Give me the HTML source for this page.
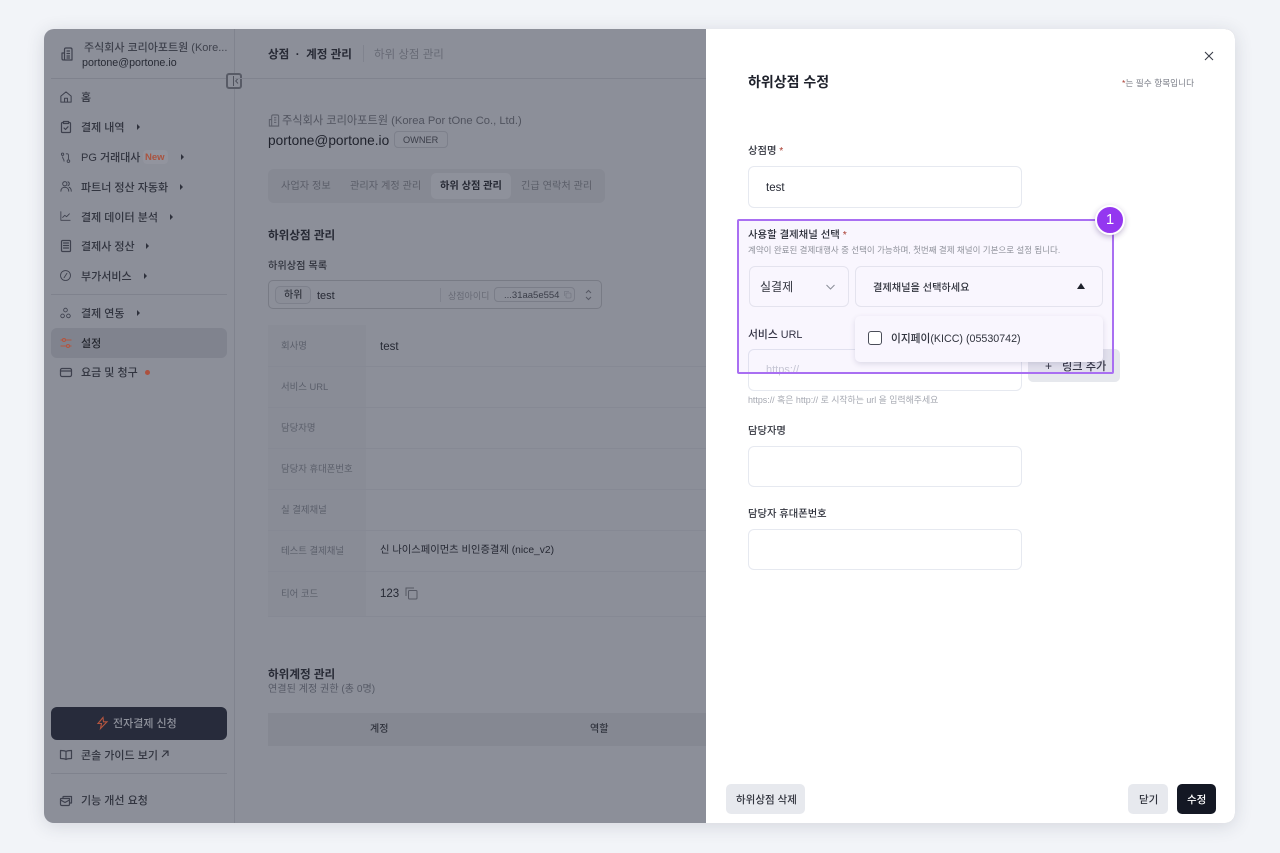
<!DOCTYPE html>
<html lang="ko">
<head>
<meta charset="utf-8">
<title>하위상점 수정</title>
<style>
html,body{margin:0;padding:0;width:1280px;height:853px;overflow:hidden;background:#f2f4f8}
body{font-family:"Liberation Sans","Noto Sans CJK KR",sans-serif;position:relative;color:#2a2d38}
#frame{position:absolute;left:44px;top:29px;width:1191px;height:794px;border-radius:10px;overflow:hidden;background:#8c8f99;box-shadow:0 3px 18px rgba(40,48,70,.15)}
.a{position:absolute}
.t{position:absolute;white-space:nowrap;line-height:16px;margin-top:-6px}
.b{position:absolute;box-sizing:border-box}
svg{position:absolute;fill:none;overflow:visible}
.nav{font-size:11px;color:#31343f;font-weight:500}
.ar{position:absolute;width:0;height:0;border-left:3.5px solid #2e313c;border-top:3px solid transparent;border-bottom:3px solid transparent;margin-top:-3px}
.ic{stroke:#3e414e;stroke-width:1.2;stroke-linecap:round;stroke-linejoin:round}
.lab{font-size:9.400px;color:#5b5f6b;margin-top:-7px}
.val{font-size:11px;color:#262934}
.line{position:absolute;height:1px;background:#868994}
.inp{position:absolute;box-sizing:border-box;background:#fff;border:1px solid #e6e9f0;border-radius:6px}
.fl{font-size:10.300px;color:#30333d;font-weight:500}
.red{color:#a83a2e}
</style>
</head>
<body>
<div id="frame">
<div class="a" style="left:-44px;top:-29px;width:1280px;height:853px">

  <!-- sidebar -->
  <div class="b" style="left:234px;top:29px;width:1px;height:794px;background:#80838e"></div>
  <svg style="left:61px;top:47px" width="12" height="14" viewBox="0 0 12 14" class="ic"><path d="M3.500 13V2.500Q3.500 1 5 1h4.500Q11 1 11 2.500V13H3.500zM3.500 6H1v5.500Q1 13 2.500 13M6 4h2.500M6 6.500h2.500M6 9h2.500M6 11h2.500"/></svg>
  <div class="t" style="left:84px;top:46px;font-size:11px;color:#3f424d;font-weight:500">주식회사 코리아포트원 (Kore...</div>
  <div class="t" style="left:82px;top:61px;font-size:10.700px;color:#272a34">portone@portone.io</div>
  <div class="line" style="left:51px;top:78px;width:183px;background:#7f828d"></div>
  <div class="b" style="left:226px;top:73px;width:16px;height:16px;border:2px solid #585b66;border-radius:3px;background:#8c8f99"></div>
  <div class="b" style="left:233px;top:76px;width:1px;height:10px;background:#4f525d"></div>
  <svg style="left:235px;top:78px" width="3" height="6" viewBox="0 0 3 6" stroke="#4f525d" stroke-width="1"><path d="M3 .5L.7 3 3 5.500"/></svg>

  <svg style="left:60px;top:91px" width="12" height="12" viewBox="0 0 14 14" class="ic"><path d="M1 6L7 1l6 5v7H1zM5.300 13V8.500h3.400V13"/></svg>
  <div class="t nav" style="left:81px;top:96px">홈</div>

  <svg style="left:61px;top:121px" width="10" height="12" viewBox="0 0 10 12" class="ic"><path d="M2.500 1.500H1.500Q.5 1.500.5 2.500v8q0 1 1 1h7q1 0 1-1v-8q0-1-1-1h-1M2.500.5h5v2h-5zM3 7l1.500 1.500L7 5.800"/></svg>
  <div class="t nav" style="left:81px;top:126px">결제 내역</div><div class="ar" style="left:137px;top:127px"></div>

  <svg style="left:60px;top:152px" width="11" height="11" viewBox="0 0 14 15" class="ic"><circle cx="3" cy="3" r="1.600"/><circle cx="11" cy="12.500" r="1.800"/><path d="M3 6.500c0 3 2 2.500 2 6M8 2.500h1.500c1 0 1.500.5 1.500 2v5"/></svg>
  <div class="t nav" style="left:81px;top:156px">PG 거래대사</div>
  <div class="b" style="left:143px;top:150px;width:25px;height:14px;background:#92949e;border-radius:4px"></div>
  <div class="t" style="left:145px;top:156px;font-size:9.500px;font-weight:700;color:#a9533f">New</div>
  <div class="ar" style="left:181px;top:157px"></div>

  <svg style="left:60px;top:181px" width="12" height="11" viewBox="0 0 15 14" class="ic"><circle cx="6" cy="3.500" r="2.700"/><path d="M1 13c0-3 2-5 5-5s5 2 5 5M10 1a2.700 2.700 0 010 5M11.500 8c1.800.7 2.700 2.500 2.700 5"/></svg>
  <div class="t nav" style="left:81px;top:186px">파트너 정산 자동화</div><div class="ar" style="left:180px;top:187px"></div>

  <svg style="left:60px;top:211px" width="11" height="10" viewBox="0 0 15 14" class="ic"><path d="M1 1v12h13M3.500 9l3-3 2.500 2 4-4"/></svg>
  <div class="t nav" style="left:81px;top:216px">결제 데이터 분석</div><div class="ar" style="left:170px;top:217px"></div>

  <svg style="left:61px;top:240px" width="10" height="12" viewBox="0 0 10 12" class="ic"><rect x=".5" y=".5" width="9" height="11" rx="1"/><path d="M2.500 3h5M2.500 5.500h5M2.500 8h5"/></svg>
  <div class="t nav" style="left:81px;top:245px">결제사 정산</div><div class="ar" style="left:146px;top:246px"></div>

  <svg style="left:60px;top:270px" width="11" height="11" viewBox="0 0 15 15" class="ic"><circle cx="7.500" cy="7.500" r="6.800"/><path d="M5.500 10.500l4-6"/></svg>
  <div class="t nav" style="left:81px;top:275px">부가서비스</div><div class="ar" style="left:144px;top:276px"></div>

  <div class="line" style="left:51px;top:294px;width:176px;background:#7f828d"></div>

  <svg style="left:60px;top:307px" width="11" height="12" viewBox="0 0 15 15" class="ic"><circle cx="7.500" cy="3.500" r="2.500"/><circle cx="3.500" cy="11.500" r="2.500"/><circle cx="11.500" cy="11.500" r="2.500"/></svg>
  <div class="t nav" style="left:81px;top:312px">결제 연동</div><div class="ar" style="left:137px;top:313px"></div>

  <div class="b" style="left:51px;top:328px;width:176px;height:30px;border-radius:6px;background:#80838e"></div>
  <svg style="left:60px;top:338px" width="12" height="10" viewBox="0 0 12 10" stroke="#b4553f" stroke-width="1.100"><path d="M.5 2h1.500M6 2h5.500M.5 8h5.500M10 8h1.500"/><circle cx="4" cy="2" r="1.500"/><circle cx="8" cy="8" r="1.500"/></svg>
  <div class="t nav" style="left:81px;top:342px;color:#24272f;font-weight:500">설정</div>

  <svg style="left:60px;top:368px" width="12" height="9" viewBox="0 0 12 9" class="ic"><rect x=".5" y=".5" width="11" height="8" rx="1.500"/><path d="M.5 3h11"/></svg>
  <div class="t nav" style="left:81px;top:371px">요금 및 청구</div>
  <div class="b" style="left:145px;top:370px;width:5px;height:5px;border-radius:50%;background:#ac513e"></div>

  <div class="b" style="left:51px;top:707px;width:176px;height:33px;border-radius:6px;background:#272b3b"></div>
  <svg style="left:97px;top:717px" width="11" height="12" viewBox="0 0 11 12" stroke="#b4553f" stroke-width="1.100"><path d="M6 .5L1 6.500h3.500L3.500 11.500 10 4.800H6.500z"/></svg>
  <div class="t" style="left:113px;top:722px;font-size:11px;font-weight:500;color:#8f929c">전자결제 신청</div>

  <svg style="left:60px;top:750px" width="12" height="10" viewBox="0 0 12 10" class="ic"><path d="M6 1.500C5 .8 3 .5.500.5v8c2.500 0 4.500.3 5.500 1 1-.7 3-1 5.500-1v-8C9 .5 7 .8 6 1.500v8"/></svg>
  <div class="t" style="left:81px;top:754px;font-size:11px;font-weight:500;color:#31343f">콘솔 가이드 보기</div>
  <svg style="left:161px;top:750px" width="8" height="8" viewBox="0 0 8 8" stroke="#2e313c" stroke-width="1.100"><path d="M1 7l6-6M2 1h5v5"/></svg>
  <div class="line" style="left:51px;top:773px;width:176px;background:#7f828d"></div>
  <svg style="left:60px;top:796px" width="12" height="10" viewBox="0 0 12 10" class="ic"><path d="M3 2V1q0-.5.500-.5h8v6.500h-1.500M.5 3q0-.5.500-.5h8.500V8q0 1.500-1 1.500H2Q.5 9.500.5 8zM.5 4l4.500 2.500L9.500 4"/></svg>
  <div class="t" style="left:81px;top:799px;font-size:11px;font-weight:500;color:#31343f">기능 개선 요청</div>

  <!-- header -->
  <div class="t" style="left:268px;top:53px;font-size:11.600px;font-weight:700;color:#272a35">상점 &nbsp;·&nbsp; 계정 관리</div>
  <div class="b" style="left:363px;top:45px;width:1px;height:17px;background:#80838e"></div>
  <div class="t" style="left:374px;top:53px;font-size:11.500px;color:#686b76">하위 상점 관리</div>
  <div class="line" style="left:235px;top:78px;width:471px;background:#80838e"></div>

  <!-- account -->
  <svg style="left:268px;top:114px" width="12" height="13" viewBox="0 0 12 14" stroke="#5c5f6a" stroke-width="1.100"><path d="M3.500 13V2.500Q3.500 1 5 1h4.500Q11 1 11 2.500V13H3.500zM3.500 6H1v7h10M6 4h2.500M6 6.500h2.500M6 9h2.500"/></svg>
  <div class="t" style="left:282px;top:119px;font-size:11.200px;color:#50535e">주식회사 코리아포트원 (Korea Por tOne Co., Ltd.)</div>
  <div class="t" style="left:268px;top:139px;font-size:13.700px;font-weight:500;color:#1f222c">portone@portone.io</div>
  <div class="b" style="left:394px;top:131px;width:54px;height:17px;border:1px solid #7d808b;border-radius:4px"></div>
  <div class="t" style="left:403px;top:138px;font-size:9.200px;color:#3b3e49">OWNER</div>

  <!-- tabs -->
  <div class="b" style="left:268px;top:169px;width:337px;height:34px;border-radius:6px;background:#868993"></div>
  <div class="b" style="left:431px;top:173px;width:80px;height:26px;border-radius:5px;background:#8e919b"></div>
  <div class="t" style="left:281px;top:185px;font-size:10.200px;color:#5b5e69">사업자 정보</div>
  <div class="t" style="left:350px;top:185px;font-size:10.200px;color:#5b5e69">관리자 계정 관리</div>
  <div class="t" style="left:440px;top:185px;font-size:10.200px;font-weight:700;color:#262934">하위 상점 관리</div>
  <div class="t" style="left:521px;top:185px;font-size:10.200px;color:#5b5e69">긴급 연락처 관리</div>

  <div class="t" style="left:268px;top:234px;font-size:11.600px;font-weight:700;color:#272a35">하위상점 관리</div>
  <div class="t" style="left:268px;top:265px;font-size:10.200px;font-weight:500;color:#30333d">하위상점 목록</div>

  <div class="b" style="left:268px;top:280px;width:334px;height:29px;border:1px solid #787b85;border-radius:5px;background:#8c8f99"></div>
  <div class="b" style="left:275px;top:286px;width:36px;height:18px;border:1px solid #7d808b;border-radius:5px;background:#8a8d97"></div>
  <div class="t" style="left:284px;top:294px;font-size:10px;font-weight:500;color:#30333d">하위</div>
  <div class="t" style="left:317px;top:294px;font-size:11px;font-weight:500;color:#262934">test</div>
  <div class="b" style="left:440px;top:288px;width:1px;height:14px;background:#7f828d"></div>
  <div class="t" style="left:448px;top:294px;font-size:9px;color:#686b76">상점아이디</div>
  <div class="b" style="left:494px;top:287px;width:81px;height:15px;border:1px solid #7a7d88;border-radius:4px"></div>
  <div class="t" style="left:504px;top:294px;font-size:9.500px;color:#3b3e49">...31aa5e554</div>
  <svg style="left:563px;top:290px" width="9" height="9" viewBox="0 0 9 9" stroke="#767984" stroke-width=".8"><rect x="3" y="3" width="5" height="5" rx="1"/><path d="M6 1.500H1.500V6"/></svg>
  <svg style="left:585px;top:289px" width="7" height="12" viewBox="0 0 7 12" stroke="#565964" stroke-width="1"><path d="M1 4l2.500-2.500L6 4M1 8l2.500 2.500L6 8"/></svg>

  <!-- table -->
  <div class="b" style="left:268px;top:325px;width:98px;height:291px;background:#898c96"></div>
  <div class="line" style="left:268px;top:366px;width:438px"></div>
  <div class="line" style="left:268px;top:407px;width:438px"></div>
  <div class="line" style="left:268px;top:448px;width:438px"></div>
  <div class="line" style="left:268px;top:489px;width:438px"></div>
  <div class="line" style="left:268px;top:530px;width:438px"></div>
  <div class="line" style="left:268px;top:571px;width:438px"></div>
  <div class="line" style="left:268px;top:616px;width:438px"></div>
  <div class="t lab" style="left:281px;top:345px">회사명</div>
  <div class="t val" style="left:380px;top:345px;font-size:11.500px">test</div>
  <div class="t lab" style="left:281px;top:386px">서비스 URL</div>
  <div class="t lab" style="left:281px;top:427px">담당자명</div>
  <div class="t lab" style="left:281px;top:468px">담당자 휴대폰번호</div>
  <div class="t lab" style="left:281px;top:509px">실 결제채널</div>
  <div class="t lab" style="left:281px;top:550px">테스트 결제채널</div>
  <div class="t val" style="left:380px;top:549px;font-size:10.300px">신 나이스페이먼츠 비인증결제 (nice_v2)</div>
  <div class="t lab" style="left:281px;top:593px">티어 코드</div>
  <div class="t val" style="left:380px;top:592px;font-size:11.500px">123</div>
  <svg style="left:405px;top:587px" width="13" height="13" viewBox="0 0 13 13" stroke="#565964" stroke-width="1"><rect x="3.500" y="3.500" width="8.500" height="8.500" rx="1"/><path d="M9 1H1v8"/></svg>

  <div class="t" style="left:268px;top:673px;font-size:11.600px;font-weight:700;color:#272a35">하위계정 관리</div>
  <div class="t" style="left:268px;top:688px;font-size:10.100px;color:#565a66">연결된 계정 권한 (총 0명)</div>
  <div class="b" style="left:268px;top:713px;width:438px;height:33px;background:#858892"></div>
  <div class="t" style="left:370px;top:728px;font-size:10px;font-weight:500;color:#30333d">계정</div>
  <div class="t" style="left:590px;top:728px;font-size:10px;font-weight:500;color:#30333d">역할</div>

  <!-- right panel -->
  <div class="b" style="left:706px;top:29px;width:529px;height:794px;background:#fff"></div>
  <svg style="left:1204px;top:51px" width="10" height="10" viewBox="0 0 10 10" stroke="#3a3d48" stroke-width="1.100"><path d="M1 1l8 8M9 1L1 9"/></svg>
  <div class="t" style="left:748px;top:80px;font-size:14px;font-weight:700;color:#1f222c">하위상점 수정</div>
  <div class="t" style="left:1122px;top:81px;font-size:8.700px;color:#7d808a"><span class="red">*</span>는 필수 항목입니다</div>

  <div class="t fl" style="left:748px;top:150px">상점명 <span class="red">*</span></div>
  <div class="inp" style="left:748px;top:166px;width:274px;height:42px"></div>
  <div class="t" style="left:766px;top:186px;font-size:11.500px;color:#262934;font-weight:500">test</div>

  <div class="t fl" style="left:748px;top:333px;font-size:10.800px">서비스 URL</div>
  <div class="inp" style="left:748px;top:349px;width:274px;height:42px"></div>
  <div class="t" style="left:766px;top:368px;font-size:11px;color:#c9ccd3">https://</div>
  <div class="b" style="left:1028px;top:349px;width:92px;height:33px;border-radius:5px;background:#e6e8ed"></div>
  <div class="t" style="left:1045px;top:364px;font-size:12px;font-weight:500;color:#30333d">+</div>
  <div class="t" style="left:1062px;top:365px;font-size:11.200px;font-weight:500;color:#30333d">링크 추가</div>
  <div class="t" style="left:748px;top:400px;font-size:8.900px;color:#a5a8b1;margin-top:-8px">https:// 혹은 http:// 로 시작하는 url 을 입력해주세요</div>

  <div class="t fl" style="left:748px;top:430px">담당자명</div>
  <div class="inp" style="left:748px;top:446px;width:274px;height:41px"></div>
  <div class="t fl" style="left:748px;top:513px">담당자 휴대폰번호</div>
  <div class="inp" style="left:748px;top:529px;width:274px;height:41px"></div>

  <!-- highlight -->
  <div class="b" style="left:737px;top:219px;width:377px;height:155px;border:2px solid #a96ff2;border-radius:2px;background:rgba(147,80,235,.05)"></div>
  <div class="t fl" style="left:748px;top:234px;color:#2a2d38;font-size:10.400px">사용할 결제채널 선택 <span class="red">*</span></div>
  <div class="t" style="left:748px;top:248px;font-size:8.500px;color:#8f929b">계약이 완료된 결제대행사 중 선택이 가능하며, 첫번째 결제 채널이 기본으로 설정 됩니다.</div>
  <div class="b" style="left:749px;top:266px;width:100px;height:41px;border:1px solid #e4e3ee;border-radius:6px;background:#f9f6fe"></div>
  <div class="t" style="left:760px;top:285px;font-size:12px;color:#30333d">실결제</div>
  <svg style="left:826px;top:284px" width="9" height="6" viewBox="0 0 9 6" stroke="#8b8e98" stroke-width="1"><path d="M.5 1l4 4 4-4"/></svg>
  <div class="b" style="left:855px;top:266px;width:248px;height:41px;border:1px solid #e4e3ee;border-radius:6px;background:#f9f6fe"></div>
  <div class="t" style="left:873px;top:287px;font-size:10.200px;font-weight:500;color:#30333d">결제채널을 선택하세요</div>
  <div class="a" style="left:1077px;top:283px;width:0;height:0;border-left:4px solid transparent;border-right:4px solid transparent;border-bottom:6px solid #1f222c"></div>
  <div class="b" style="left:855px;top:316px;width:248px;height:46px;border-radius:5px;background:#f9f6fe;box-shadow:0 2px 6px rgba(50,40,90,.14)"></div>
  <div class="b" style="left:868px;top:331px;width:14px;height:14px;border:1.500px solid #4a4d58;border-radius:3px;background:#fff"></div>
  <div class="t" style="left:891px;top:337px;font-size:10.700px;font-weight:500;color:#30333d">이지페이(KICC) (05530742)</div>

  <div class="a" style="left:1095px;top:205px;width:30px;height:30px;box-sizing:border-box;border-radius:50%;background:#9437f0;border:2px solid #fff;box-shadow:0 2px 6px rgba(60,30,110,.3);color:#fff;font-size:15px;line-height:26px;text-align:center">1</div>

  <!-- footer -->
  <div class="b" style="left:726px;top:784px;width:79px;height:30px;border-radius:5px;background:#e7e9ee"></div>
  <div class="t" style="left:736px;top:798px;font-size:10.500px;font-weight:500;color:#30333d">하위상점 삭제</div>
  <div class="b" style="left:1128px;top:784px;width:40px;height:30px;border-radius:5px;background:#e7e9ee"></div>
  <div class="t" style="left:1139px;top:798px;font-size:10.500px;font-weight:500;color:#30333d">닫기</div>
  <div class="b" style="left:1177px;top:784px;width:39px;height:30px;border-radius:5px;background:#141824"></div>
  <div class="t" style="left:1187px;top:798px;font-size:10.500px;font-weight:500;color:#fff">수정</div>
</div>
</div>
</body>
</html>
